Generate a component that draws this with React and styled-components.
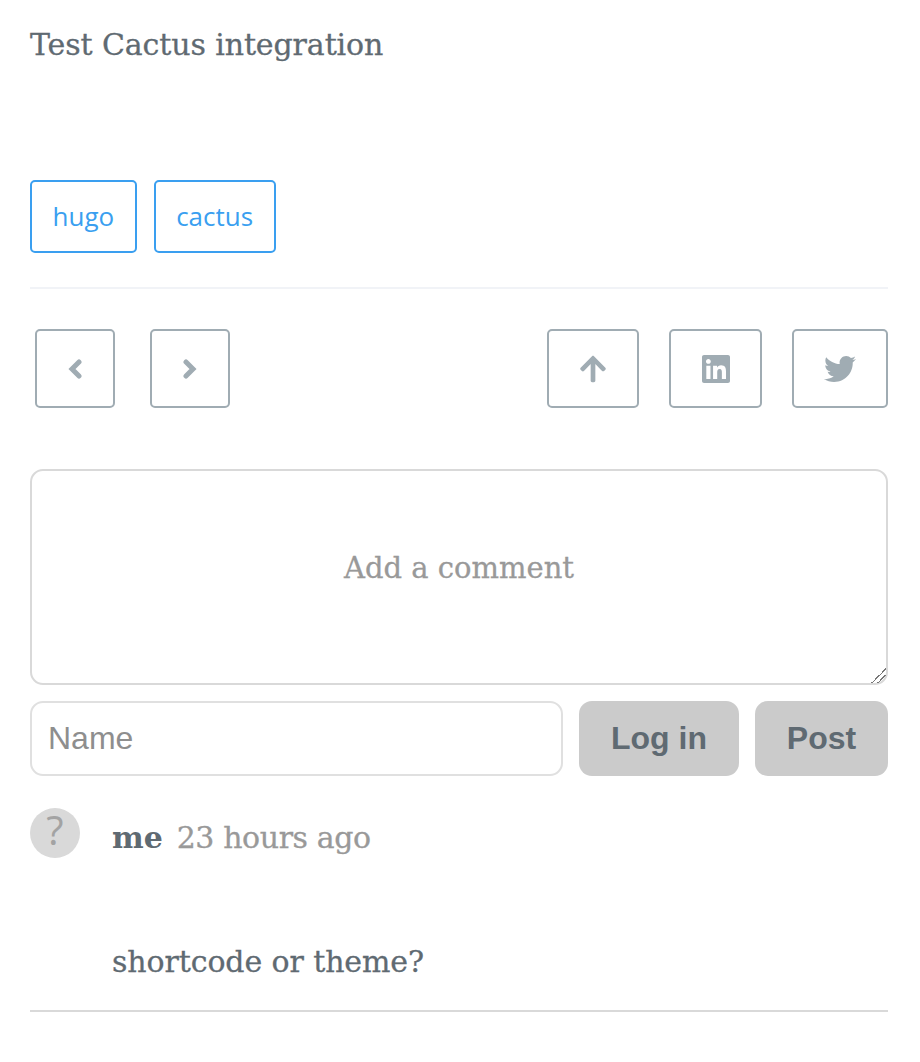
import React from 'react';
import styled, { createGlobalStyle } from 'styled-components';
import { FaArrowUp, FaLinkedin, FaTwitter } from 'react-icons/fa';

const serif = '"DejaVu Serif", "Liberation Serif", serif';
const sans = '"Liberation Sans", Arial, sans-serif';

const GlobalStyle = createGlobalStyle`
  html, body {
    margin: 0;
    background: #fff;
  }
`;

const Page = styled.div`
  width: 858px;
  padding: 0 32px 0 30px;
  color: #5f6a72;
  font-family: ${serif};
`;

const Title = styled.h1`
  margin: 0;
  padding-top: 25px;
  height: 180px;
  box-sizing: border-box;
  font-size: 30px;
  line-height: 40px;
  font-weight: 400;
  letter-spacing: -0.1px;
  -webkit-text-stroke: 0.3px #5f6a72;
  color: #5f6a72;
`;

const Tags = styled.div`
  display: flex;
  gap: 17px;
  padding-bottom: 34px;
  border-bottom: 2px solid #f1f3f7;
`;

const Tag = styled.a`
  box-sizing: border-box;
  height: 73px;
  padding: 0 20.5px 2px;
  display: flex;
  align-items: center;
  border: 2px solid #3a9ff0;
  border-radius: 5px;
  color: #3a9ff0;
  font-family: "Open Sans", sans-serif;
  font-size: 26px;
`;

const Actions = styled.div`
  display: flex;
  justify-content: space-between;
  padding: 40px 0 61px 5px;
`;

const Group = styled.div`
  display: flex;
  gap: ${(p) => p.$gap}px;
`;

const IconButton = styled.a`
  box-sizing: border-box;
  width: ${(p) => p.$w}px;
  height: 79px;
  display: flex;
  align-items: center;
  justify-content: center;
  border: 2px solid #a0acb3;
  border-radius: 5px;
  color: #a0acb3;
  font-size: ${(p) => p.$size}px;
`;

const CommentBox = styled.textarea`
  display: block;
  box-sizing: border-box;
  width: 858px;
  height: 216px;
  padding: 77px 20px 0;
  border: 2px solid #d9d9d9;
  border-radius: 13px;
  outline: none;
  text-align: center;
  font-family: ${serif};
  font-size: 29px;
  line-height: 40px;
  -webkit-text-stroke: 0.3px #999;
  color: #5f6a72;
  &::placeholder {
    color: #999;
    opacity: 1;
  }
  &::-webkit-resizer {
    background: linear-gradient(
      135deg,
      transparent 0 50%,
      #777 50% 56%,
      transparent 56% 70%,
      #777 70% 75%,
      transparent 75%
    );
  }
`;

const FormRow = styled.div`
  display: flex;
  gap: 16px;
  margin-top: 16px;
`;

const NameInput = styled.input`
  box-sizing: border-box;
  flex: 1;
  min-width: 0;
  height: 75px;
  padding: 0 16px;
  border: 2px solid #e0e0e0;
  border-radius: 13px;
  outline: none;
  font-family: ${sans};
  font-size: 32px;
  &::placeholder {
    color: #8e8e8e;
    opacity: 1;
  }
`;

const SubmitButton = styled.button`
  box-sizing: border-box;
  width: ${(p) => p.$w}px;
  height: 75px;
  padding: 0;
  border: none;
  border-radius: 13px;
  background: #cbcbcb;
  color: #5f6a72;
  font-family: ${sans};
  font-size: 32px;
  font-weight: 700;
`;

const Comment = styled.div`
  display: grid;
  grid-template-columns: 50px 1fr;
  column-gap: 32px;
  margin-top: 32px;
  padding-bottom: 28px;
  border-bottom: 2px solid #d9d9d9;
`;

const Avatar = styled.div`
  box-sizing: border-box;
  width: 50px;
  height: 50px;
  padding-bottom: 6px;
  border-radius: 50%;
  background: #d9d9d9;
  color: #a3a3a3;
  display: flex;
  align-items: center;
  justify-content: center;
  font-family: "Open Sans", sans-serif;
  font-size: 40px;
  font-weight: 400;
  line-height: 1;
`;

const Body = styled.div`
  font-size: 30px;
  line-height: 40px;
  letter-spacing: -0.1px;
`;

const Meta = styled.div`
  padding-top: 10px;
  display: flex;
  gap: 14px;
`;

const Author = styled.span`
  font-weight: 700;
  color: #5f6a72;
`;

const Time = styled.span`
  color: #999;
  letter-spacing: -0.4px;
  -webkit-text-stroke: 0.3px #999;
`;

const Message = styled.p`
  margin: 84px 0 0;
  color: #5f6a72;
  -webkit-text-stroke: 0.3px #5f6a72;
`;

const Chevron = ({ left }) => (
  <svg width="14" height="20" viewBox="0 0 14 20" fill="none" stroke="currentColor" strokeWidth="5" strokeLinecap="round" strokeLinejoin="miter">
    <polyline points={left ? '11,3 4,10 11,17' : '3,3 10,10 3,17'} />
  </svg>
);

export default function App() {
  return (
    <>
      <GlobalStyle />
      <Page>
        <Title>Test Cactus integration</Title>
        <Tags>
          <Tag>hugo</Tag>
          <Tag>cactus</Tag>
        </Tags>
        <Actions>
          <Group $gap={35}>
            <IconButton $w={80}><Chevron left /></IconButton>
            <IconButton $w={80}><Chevron /></IconButton>
          </Group>
          <Group $gap={30}>
            <IconButton $w={92} $size={30}><FaArrowUp /></IconButton>
            <IconButton $w={93} $size={32}><FaLinkedin /></IconButton>
            <IconButton $w={96} $size={32}><FaTwitter /></IconButton>
          </Group>
        </Actions>
        <CommentBox placeholder="Add a comment" />
        <FormRow>
          <NameInput placeholder="Name" />
          <SubmitButton $w={160}>Log in</SubmitButton>
          <SubmitButton $w={133}>Post</SubmitButton>
        </FormRow>
        <Comment>
          <Avatar>?</Avatar>
          <Body>
            <Meta>
              <Author>me</Author>
              <Time>23 hours ago</Time>
            </Meta>
            <Message>shortcode or theme?</Message>
          </Body>
        </Comment>
      </Page>
    </>
  );
}
